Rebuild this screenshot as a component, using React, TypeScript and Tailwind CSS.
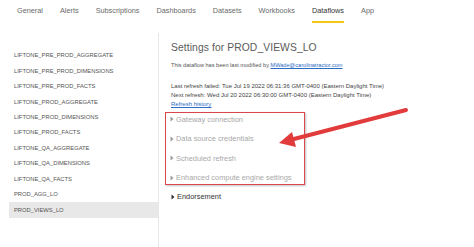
import { ChevronRight } from "lucide-react";

const tabs = ["General", "Alerts", "Subscriptions", "Dashboards", "Datasets", "Workbooks", "Dataflows", "App"];

const flows = [
  "LIFTONE_PRE_PROD_AGGREGATE",
  "LIFTONE_PRE_PROD_DIMENSIONS",
  "LIFTONE_PRE_PROD_FACTS",
  "LIFTONE_PROD_AGGREGATE",
  "LIFTONE_PROD_DIMENSIONS",
  "LIFTONE_PROD_FACTS",
  "LIFTONE_QA_AGGREGATE",
  "LIFTONE_QA_DIMENSIONS",
  "LIFTONE_QA_FACTS",
  "PROD_AGG_LO",
  "PROD_VIEWS_LO",
];

const sections = [
  "Gateway connection",
  "Data source credentials",
  "Scheduled refresh",
  "Enhanced compute engine settings",
];

function Caret({ dark }: { dark?: boolean }) {
  return (
    <svg width="4" height="6" viewBox="0 0 4 6" className="mr-[2px] shrink-0">
      <path d="M0.5 0.5 L3.5 3 L0.5 5.5 Z" fill={dark ? "#333" : "#9a9a9a"} />
    </svg>
  );
}

export default function App() {
  return (
    <div className="relative w-[474px] h-[247px] overflow-hidden bg-white font-['Liberation_Sans',Arial,sans-serif]">
      {/* tab bar */}
      <nav className="flex h-[33px] pl-[17px] gap-[17px] pt-[6px] text-[7.3px] text-[#6b6b6b]">
        {tabs.map((t) => (
          <div key={t} className="flex flex-col items-stretch">
            <span className={t === "Dataflows" ? "text-[#333]" : ""}>{t}</span>
            {t === "Dataflows" && <div className="mt-[4px] h-[2px] bg-[#f2c811]" />}
          </div>
        ))}
      </nav>

      <div className="flex h-[214px]">
        {/* dataflow list */}
        <aside className="w-[159px] border-r border-[#e6e6e6] pt-[15px] pl-[9px]">
          {flows.map((f) => (
            <div
              key={f}
              className={`flex h-[15.43px] items-center pl-[5px] text-[5.8px] text-[#555] ${
                f === "PROD_VIEWS_LO" ? "bg-[#e8e8e8] text-[#333]" : ""
              }`}
            >
              {f}
            </div>
          ))}
        </aside>

        {/* settings pane */}
        <main className="flex-1 pl-[12px] pt-[8px] text-[#444]">
          <h1 className="text-[10.3px] leading-[13px] text-[#5a5a5a] tracking-[0.1px]">Settings for PROD_VIEWS_LO</h1>
          <p className="mt-[7px] text-[5.6px] text-[#555]">
            This dataflow has been last modified by{" "}
            <span className="text-[#2b6cc4] underline">MWade@carolinatractor.com</span>
          </p>
          <div className="mt-[13px] text-[6px] leading-[9px] text-[#444]">
            <p>Last refresh failed: Tue Jul 19 2022 06:31:36 GMT-0400 (Eastern Daylight Time)</p>
            <p>Next refresh: Wed Jul 20 2022 06:30:00 GMT-0400 (Eastern Daylight Time)</p>
            <p className="text-[#2b6cc4] underline">Refresh history</p>
          </div>

          <div className="mt-[3px] -ml-[6px] flex w-[140px] flex-col gap-[7.5px] border-[1.5px] border-[#d9474c] pl-[4px] shadow-[1px_1px_2px_rgba(0,0,0,0.25)]">
            {sections.map((s) => (
              <div key={s} className="flex h-[12px] items-center text-[7.4px] text-[#a8a8a8]">
                <Caret />
                {s}
              </div>
            ))}
          </div>
          <div className="mt-[5px] flex h-[14px] items-center text-[7.4px] text-[#333]">
            <Caret dark />
            Endorsement
          </div>
        </main>
      </div>

      {/* annotation arrow */}
      <svg className="pointer-events-none absolute left-0 top-0" width="474" height="247">
        <line x1="406" y1="110" x2="290" y2="140" stroke="#e23b3b" strokeWidth="4" strokeLinecap="round" />
        <path d="M279 143 L292 132 L296 147 Z" fill="#e23b3b" />
      </svg>
    </div>
  );
}
